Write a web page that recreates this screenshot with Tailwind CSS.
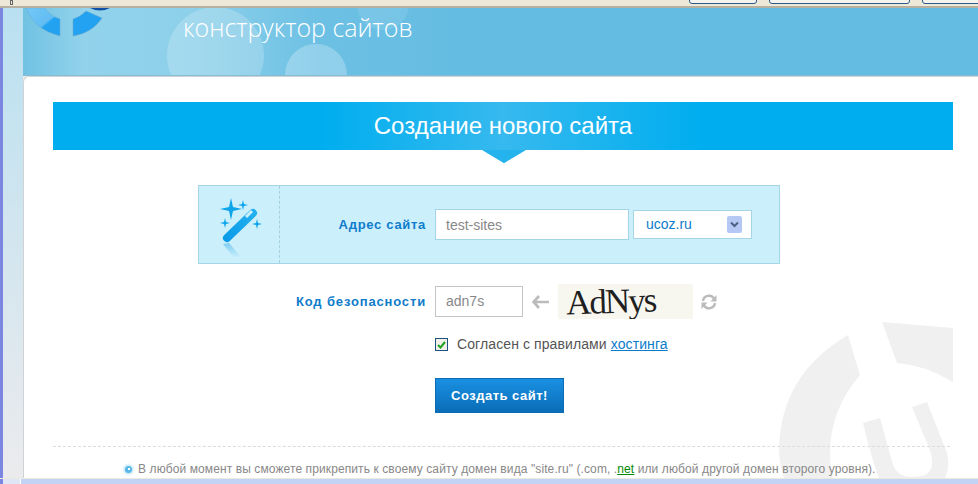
<!DOCTYPE html>
<html lang="ru">
<head>
<meta charset="utf-8">
<title>Создание нового сайта</title>
<script src="https://cdn.jsdelivr.net/npm/@tailwindcss/browser@4"></script>
</head>
<body class="m-0 w-[978px] h-[484px] overflow-hidden flex flex-col bg-white font-['Liberation_Sans',Arial,sans-serif]">
  <div class="h-[8px] shrink-0 bg-[#ece9d8] border-b-2 border-[#b5b09f] relative overflow-hidden">
    <div class="absolute left-[10px] top-0 w-[3px] h-[5px] border border-[#666]"></div>
    <div class="absolute left-[689px] -top-[6px] w-[68px] h-[10px] bg-[#f4f3ee] border border-[#2b5a8c] rounded-[3px]"></div>
    <div class="absolute left-[769px] -top-[6px] w-[141px] h-[10px] bg-[#f4f3ee] border border-[#2b5a8c] rounded-[3px]"></div>
    <div class="absolute left-[922px] -top-[6px] w-[70px] h-[10px] bg-[#f4f3ee] border border-[#2b5a8c] rounded-[3px]"></div>
  </div>

  <div class="flex-1 min-h-0 flex">
    <div class="w-[3px] shrink-0 bg-[#7a86e0]"></div>
    <div class="w-[20px] shrink-0 bg-gradient-to-b from-[#b9e0f1] to-[#ebebed]"></div>
    <div class="flex-1 min-w-0 flex flex-col bg-[#ebebed]">
      <header class="relative h-[68px] shrink-0 overflow-hidden border-b border-[#86bcd4] bg-[linear-gradient(90deg,#70c2e3_0px,#92d2eb_60px,#8dd0ea_170px,#6cc0e4_300px,#64bce2_450px,#64bce2_955px)]">
        <div class="absolute left-[144px] -top-[1px] w-[97px] h-[97px] rounded-full bg-white/20"></div>
        <div class="absolute left-[262px] top-[36px] w-[62px] h-[62px] rounded-full bg-white/25"></div>
        <div class="absolute left-[334px] -top-[30px] w-[52px] h-[52px] rounded-full bg-white/10"></div>
        <svg class="absolute left-0 top-0" width="110" height="40" viewBox="23 8 110 40">
          <defs>
            <linearGradient id="lg" x1="0" y1="0" x2="1" y2="1">
              <stop offset="0" stop-color="#74c8f6"/>
              <stop offset="0.55" stop-color="#62bdf3"/>
              <stop offset="0.6" stop-color="#22a2f0"/>
            </linearGradient>
          </defs>
          <path d="M26 8 Q33 29 60 36 V19 Q50 16 45 8 Z" fill="url(#lg)" stroke="#6aa9cc" stroke-width="0.5"/>
          <path d="M73 36 V19 Q80 17 86 11 L102 18 Q92 33 73 36 Z" fill="#22a2f0" stroke="#6aa9cc" stroke-width="0.5"/>
          <path d="M90 8 Q100 13 110 8 Z" fill="#0f4fa8"/>
        </svg>
        <div class="absolute left-[160px] top-[1px] text-[25px] leading-[36px] font-light text-white font-['Open_Sans',sans-serif] whitespace-nowrap">конструктор сайтов</div>
      </header>

      <main class="relative flex-1 min-h-0 overflow-hidden bg-white border-l border-t border-[#cfd3d6] rounded-tl-[6px] pl-[29px] pr-[25px] pt-[25px]">
        <svg class="absolute left-[755px] top-[245px]" width="200" height="162" viewBox="779 322 200 162">
          <g fill="#f0f0f0">
            <path d="M848 335 L860 375 Q830 410 830 453 Q830 470 834 484 L786 484 Q779 465 779 450 Q780 375 848 335 Z"/>
            <path d="M882 322 L953 328 L953 382 Q925 365 897 363 Z"/>
            <path d="M863 423 L880 418 L893 465 Q900 482 925 475 Q936 470 930 450 L912 407 L927 402 L947 453 Q951 470 942 484 L882 484 Q876 475 863 423 Z"/>
          </g>
        </svg>

        <div class="relative">
          <h1 class="h-[48px] flex items-center justify-center text-white text-[24px] font-normal bg-[linear-gradient(90deg,#00aeef_0%,#00aeef_30%,#36b9ee_50%,#00aeef_72%,#00aeef_100%)]">Создание нового сайта</h1>
          <svg class="absolute left-[429px] top-[48px]" width="44" height="14" viewBox="0 0 44 14">
            <path d="M0 0 H44 L24 12 Q22 14 20 12 Z" fill="#25b3ee"/>
          </svg>
        </div>

        <section class="relative ml-[145px] mt-[35px] w-[582px] h-[79px] bg-[#cceffc] border border-[#a5d6e8] flex items-center">
          <div class="w-[81px] h-full shrink-0 border-r border-dashed border-[#a5d0e0]">
            <svg width="80" height="77" viewBox="0 0 80 77">
              <defs>
                <linearGradient id="rf" x1="0" y1="0" x2="0" y2="1">
                  <stop offset="0" stop-color="#7fcdf2"/>
                  <stop offset="1" stop-color="#cceffc"/>
                </linearGradient>
                <linearGradient id="wd" x1="0" y1="1" x2="1" y2="0">
                  <stop offset="0" stop-color="#0c9be8"/>
                  <stop offset="1" stop-color="#22b0f0"/>
                </linearGradient>
              </defs>
              <g fill="#0ea5ec">
                <path d="M32 12 L34 21 L43 23 L34 25 L32 34 L30 25 L21 23 L30 21 Z"/>
                <path d="M44 14 L45 18 L49 19 L45 20 L44 24 L43 20 L39 19 L43 18 Z"/>
                <path d="M26 32 L27 36 L31 37 L27 38 L26 42 L25 38 L21 37 L25 36 Z"/>
                <path d="M58 33 L59 37 L63 38 L59 39 L58 43 L57 39 L53 38 L57 37 Z"/>
              </g>
              <path d="M24 58 L30 57 L41 70 L35 72 Z" fill="url(#rf)"/>
              <path d="M28 52 L54 27" stroke="url(#wd)" stroke-width="8" stroke-linecap="round"/>
              <path d="M47 31 L53 25" stroke="#cceffc" stroke-width="3"/>
            </svg>
          </div>
          <div class="w-[146px] shrink-0 text-right text-[13px] font-bold tracking-[0.7px] text-[#0f7ccb]">Адрес сайта</div>
          <div class="ml-[9px] w-[194px] h-[31px] bg-white border border-[#a5d6e8] pl-[10px] pt-[1px] flex items-center text-[14px] text-[#888]">test-sites</div>
          <div class="ml-[4px] w-[119px] h-[29px] bg-white border border-[#a5d6e8] pl-[12px] pr-[9px] flex items-center justify-between text-[14px] text-[#0b7ccb]">
            <span>ucoz.ru</span>
            <span class="w-[15px] h-[17px] rounded-[2px] bg-[#b5c8f5] flex items-center justify-center">
              <svg width="9" height="7" viewBox="0 0 9 7"><path d="M1 1.5 L4.5 5 L8 1.5" fill="none" stroke="#4d6185" stroke-width="2"/></svg>
            </span>
          </div>
        </section>

        <section class="relative mt-[20px] h-[35px] flex items-center">
          <div class="w-[373px] shrink-0 text-right text-[13px] font-bold tracking-[0.85px] text-[#0f7ccb]">Код безопасности</div>
          <div class="ml-[9px] w-[88px] h-[31px] border border-[#c4c4c4] bg-white pl-[10px] flex items-center text-[14px] text-[#888]">adn7s</div>
          <svg class="ml-[9px]" width="17" height="14" viewBox="0 0 17 14"><path d="M7 1 L1.5 7 L7 13 M2 7 H17" fill="none" stroke="#bbb" stroke-width="2.6"/></svg>
          <div class="ml-[9px] w-[135px] h-[35px] bg-[#f7f7f0] overflow-hidden flex items-center pl-[8px] text-[#1f1f1f] font-['Liberation_Serif',serif] text-[35px] leading-[33px] tracking-[-2px] whitespace-nowrap">
            <span class="inline-block -rotate-2">AdNys</span>
          </div>
          <svg class="ml-[8px]" width="16" height="16" viewBox="0 0 16 16">
            <path d="M2 7 A6 6 0 0 1 13 4.5 M14 9 A6 6 0 0 1 3 11.5" fill="none" stroke="#bbb" stroke-width="2.4"/>
            <path d="M15.5 1 V7.5 H9.5 Z M0.5 15 V8.5 H6.5 Z" fill="#bbb"/>
          </svg>
        </section>

        <div class="relative ml-[382px] mt-[19px] h-[13px] flex items-center">
          <span class="w-[13px] h-[13px] shrink-0 border border-[#1c5180] bg-[#f1f1ea] flex items-center justify-center">
            <svg width="9" height="8" viewBox="0 0 9 8"><path d="M1 4 L3.5 6.5 L8 1" fill="none" stroke="#21a121" stroke-width="2"/></svg>
          </span>
          <span class="ml-[9px] text-[14px] leading-[13px] tracking-[0.1px] text-[#555] whitespace-nowrap">Согласен с правилами <a href="#" class="text-[#0b7ccb] underline">хостинга</a></span>
        </div>

        <button class="relative ml-[382px] mt-[27px] block w-[129px] h-[35px] bg-gradient-to-b from-[#1a90e2] to-[#0a6db8] border border-[#0b6cb4] text-white text-[13px] font-bold tracking-[0.5px]">Создать сайт!</button>

        <div class="relative mt-[33px] w-[897px] border-t border-dashed border-[#dcdcdc]"></div>

        <p class="relative mt-[15px] ml-[72px] flex items-center text-[12px] leading-[14px] tracking-[0.1px] text-[#888] whitespace-nowrap">
          <span class="w-[7px] h-[7px] rounded-full bg-[#5ab9e8] shadow-[0_0_3px_1px_#a9dcf3] shrink-0 mr-[6px] flex items-center justify-center"><span class="w-[2px] h-[2px] bg-white"></span></span>
          <span>В любой момент вы сможете прикрепить к своему сайту домен вида "site.ru" (.com, .<a href="#" class="text-[#008a00] underline">net</a> или любой другой домен второго уровня).</span>
        </p>
      </main>
    </div>
  </div>

  <div class="h-[6px] shrink-0 flex flex-col">
    <div class="h-[1px] bg-[#eceae0]"></div>
    <div class="flex-1 flex">
      <div class="w-[3px] bg-[#7a86e0]"></div>
      <div class="w-[17px] bg-[#dfe6f5]"></div>
      <div class="w-[1px] bg-white"></div>
      <div class="flex-1 bg-[#c3d3f5]"></div>
    </div>
  </div>
</body>
</html>
